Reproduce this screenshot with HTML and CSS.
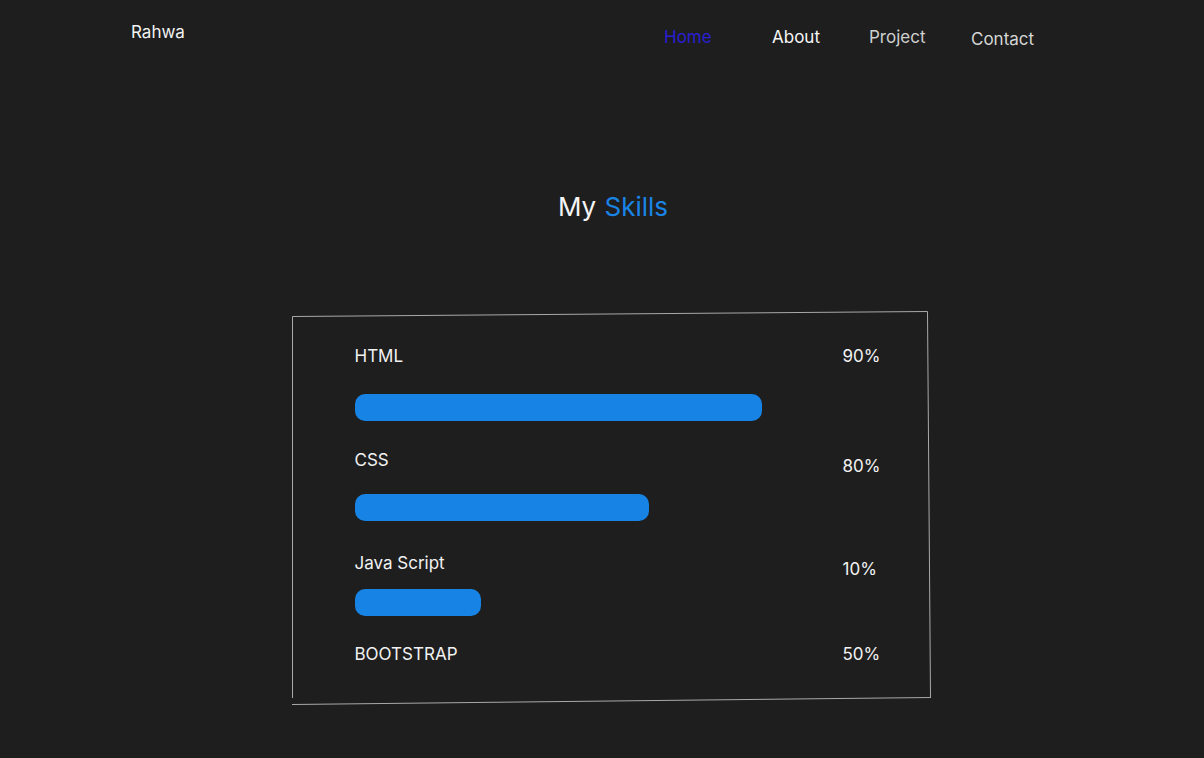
FILE: index.html
```html
<!DOCTYPE html>
<html lang="en">
<head>
<meta charset="utf-8">
<title>Rahwa - My Skills</title>
<link rel="stylesheet" href="styles.css">
</head>
<body>
<header class="header">
  <div class="brand">Rahwa</div>
  <nav class="nav">
    <a class="nav-link nav-home" href="#">Home</a>
    <a class="nav-link nav-about" href="#">About</a>
    <a class="nav-link nav-project" href="#">Project</a>
    <a class="nav-link nav-contact" href="#">Contact</a>
  </nav>
</header>

<main class="main">
  <h1 class="title">My <span class="accent">Skills</span></h1>

  <section class="card">
    <svg class="card-frame" width="640" height="395" viewBox="0 0 640 395" aria-hidden="true">
      <line x1="0.5" y1="5.5" x2="635.5" y2="0.5"/>
      <line x1="635.5" y1="0.5" x2="638.5" y2="387"/>
      <line x1="0" y1="393.5" x2="638.5" y2="386.5"/>
      <line x1="0.5" y1="5.5" x2="0.5" y2="387"/>
    </svg>

    <div class="skill skill-html">
      <div class="skill-head">
        <span class="skill-name">HTML</span>
        <span class="skill-pct">90%</span>
      </div>
      <div class="bar" style="width:407px"></div>
    </div>

    <div class="skill skill-css">
      <div class="skill-head">
        <span class="skill-name">CSS</span>
        <span class="skill-pct pct-low">80%</span>
      </div>
      <div class="bar" style="width:294px"></div>
    </div>

    <div class="skill skill-js">
      <div class="skill-head">
        <span class="skill-name">Java Script</span>
        <span class="skill-pct pct-low">10%</span>
      </div>
      <div class="bar" style="width:126px"></div>
    </div>

    <div class="skill skill-bs">
      <div class="skill-head">
        <span class="skill-name">BOOTSTRAP</span>
        <span class="skill-pct">50%</span>
      </div>
    </div>
  </section>
</main>
</body>
</html>
```
FILE: styles.css
```css
* { box-sizing: border-box; }

html, body {
  margin: 0;
  padding: 0;
  background: #1e1e1e;
  color: #f2f2f2;
  font-family: Inter, "Noto Sans", "Liberation Sans", sans-serif;
  height: 100%;
}

body { min-height: 758px; }

.header {
  display: grid;
  grid-template-columns: 533px auto;
  padding-left: 131px;
  font-size: 17px;
  line-height: 20px;
}

.brand {
  padding-top: 22px;
  color: #f2f2f2;
}

.nav {
  display: flex;
  align-items: flex-start;
  padding-top: 27px;
}

.nav-link {
  text-decoration: none;
  color: #f4f4f4;
}

.nav-home { color: #2a1fd2; width: 108px; }
.nav-about { color: #f6f6f6; width: 97px; }
.nav-project { color: #cfcfcf; width: 102px; }
.nav-contact { color: #d6d6d6; margin-top: 2px; }

.main {
  display: flex;
  flex-direction: column;
  align-items: center;
  padding-left: 18px;
}

.title {
  margin: 143px 0 0 4px;
  font-size: 26px;
  line-height: 30px;
  font-weight: 400;
  color: #f4f4f4;
  word-spacing: 1px;
}

.accent { color: #1a84e6; }

.card {
  position: relative;
  width: 639px;
  height: 394px;
  margin-top: 89px;
  padding: 35px 0 0 63px;
  display: flex;
  flex-direction: column;
}

.card-frame {
  position: absolute;
  left: 0;
  top: 0;
  pointer-events: none;
}

.card-frame line {
  stroke: #a9a9a9;
  stroke-width: 1;
}

.skill-head {
  display: grid;
  grid-template-columns: 488px auto;
  font-size: 17px;
  line-height: 20px;
  color: #f2f2f2;
}

.pct-low { position: relative; top: 6px; }

.bar {
  height: 27px;
  background: #1783e5;
  border-radius: 10px;
}

.skill-html .bar { margin-top: 28px; }
.skill-css { margin-top: 29px; }
.skill-css .bar { margin-top: 24px; }
.skill-js { margin-top: 32px; }
.skill-js .bar { margin-top: 16px; }
.skill-bs { margin-top: 28px; }
```
